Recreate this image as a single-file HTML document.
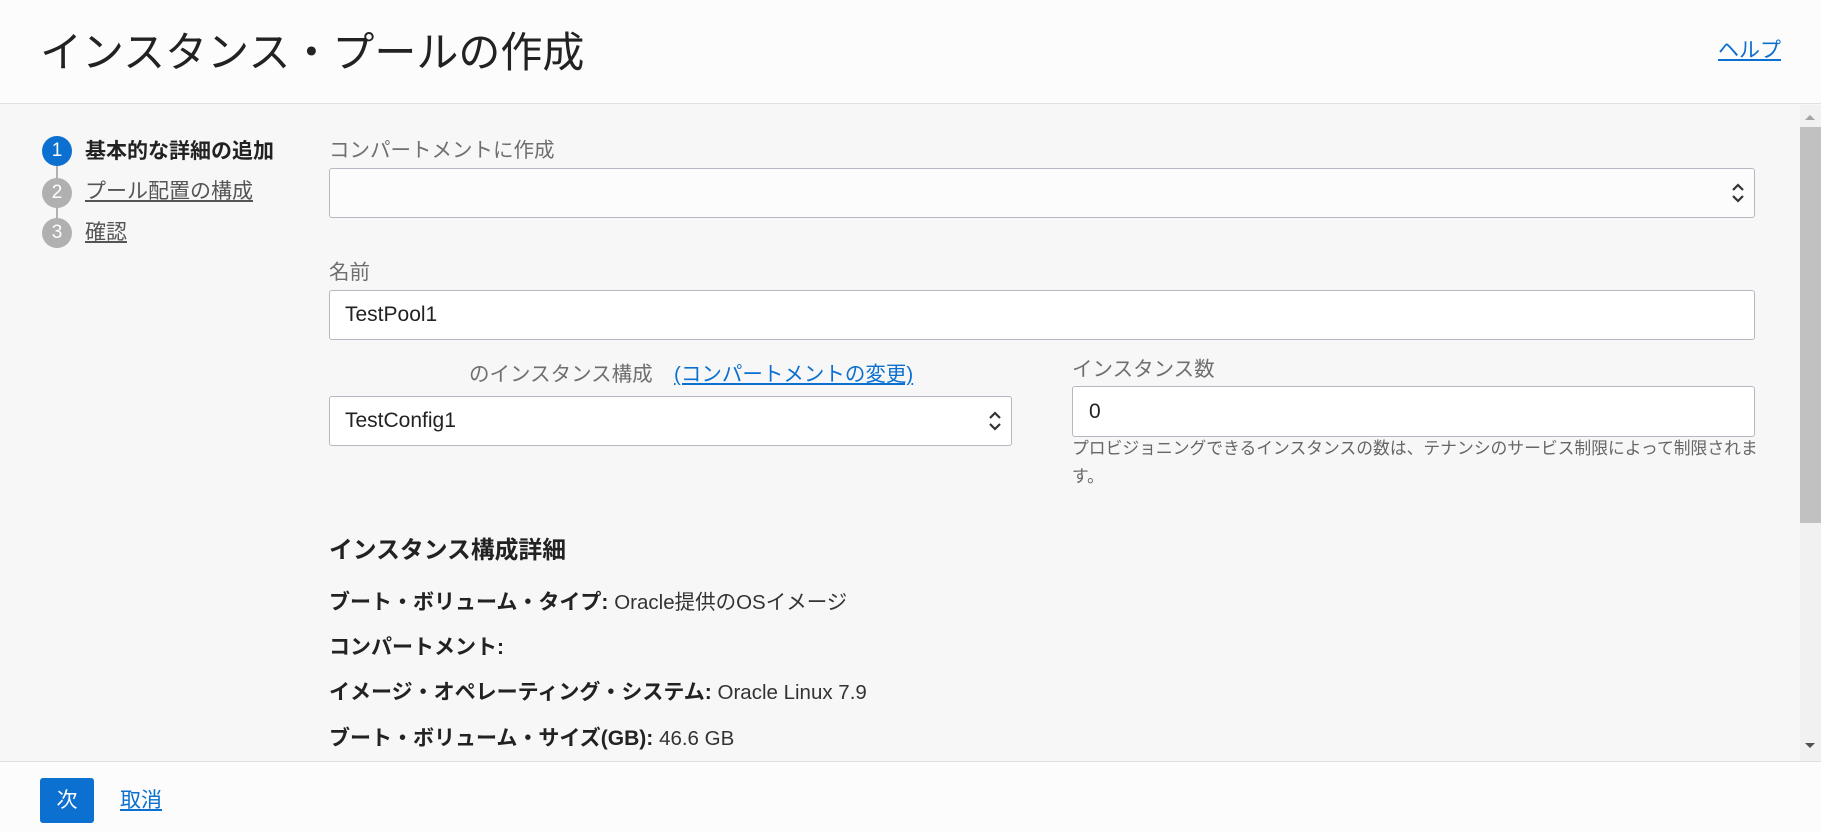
<!DOCTYPE html>
<html><head><meta charset="utf-8"><style>
*{margin:0;padding:0;box-sizing:border-box}
body{width:1821px;height:832px;overflow:hidden;background:#f7f7f7;font-family:"Liberation Sans","Noto Sans CJK JP",sans-serif;color:#222;position:relative}
.a{position:absolute;white-space:nowrap}
.hdr{position:absolute;left:0;top:0;width:1821px;height:104px;background:#fcfcfc;border-bottom:1px solid #e0e0e0}
.ftr{position:absolute;left:0;top:761px;width:1821px;height:71px;background:#fcfcfc;border-top:1px solid #e0e0e0}
.lbl{color:#6f6f6f;font-size:20.5px;line-height:28px}
.box{position:absolute;background:#fcfcfc;border:1px solid #b4b8c0;border-radius:3px}
.inp{background:#fff}
.txt{font-size:21px;line-height:28px;color:#222}
.circ{position:absolute;width:30px;height:30px;border-radius:50%;color:#fff;font-size:19px;line-height:30px;text-align:center}
.step{font-size:21px;line-height:28px}
.chev{position:absolute;width:16px;height:26px}
.row{font-size:21px;line-height:28px}
.row b{font-weight:bold}
.row span{font-size:20.5px;font-weight:normal;color:#333}
</style></head><body>
<div class="hdr"></div>
<div class="a" style="left:40px;top:25px;font-size:42px;line-height:56px;color:#222">インスタンス・プールの作成</div>
<div class="a" style="left:1718px;top:37px;font-size:21px;line-height:28px;color:#0b70cf;text-decoration:underline">ヘルプ</div>

<div class="a" style="left:56px;top:160px;width:2px;height:80px;background:#b0b0b0"></div>
<div class="circ" style="left:42px;top:136px;background:#0b70cf">1</div>
<div class="circ" style="left:42px;top:178px;background:#b0b0b0">2</div>
<div class="circ" style="left:42px;top:218px;background:#b0b0b0">3</div>
<div class="a step" style="left:85px;top:138px;font-weight:bold;color:#222">基本的な詳細の追加</div>
<div class="a step" style="left:85px;top:178px;color:#555;text-decoration:underline">プール配置の構成</div>
<div class="a step" style="left:85px;top:219px;color:#555;text-decoration:underline">確認</div>

<div class="a lbl" style="left:329px;top:137px">コンパートメントに作成</div>
<div class="box" style="left:329px;top:168px;width:1426px;height:50px"></div>
<svg class="chev" style="left:1730px;top:180px" viewBox="0 0 16 26"><path d="M3 10 L8 5 L13 10 M3 16 L8 21 L13 16" fill="none" stroke="#333" stroke-width="2.2"/></svg>

<div class="a lbl" style="left:329px;top:259px">名前</div>
<div class="box inp" style="left:329px;top:290px;width:1426px;height:50px"></div>
<div class="a txt" style="left:345px;top:301px">TestPool1</div>

<div class="a lbl" style="left:469px;top:361px">のインスタンス構成</div>
<div class="a" style="left:674px;top:361px;font-size:20.5px;line-height:28px;color:#0b70cf;text-decoration:underline">(コンパートメントの変更)</div>
<div class="box inp" style="left:329px;top:396px;width:683px;height:50px"></div>
<div class="a txt" style="left:345px;top:407px">TestConfig1</div>
<svg class="chev" style="left:987px;top:408px" viewBox="0 0 16 26"><path d="M3 10 L8 5 L13 10 M3 16 L8 21 L13 16" fill="none" stroke="#333" stroke-width="2.2"/></svg>

<div class="a lbl" style="left:1072px;top:356px">インスタンス数</div>
<div class="box inp" style="left:1072px;top:386px;width:683px;height:51px"></div>
<div class="a txt" style="left:1089px;top:398px">0</div>
<div class="a" style="left:1072px;top:435px;font-size:16.8px;line-height:28px;color:#666">プロビジョニングできるインスタンスの数は、テナンシのサービス制限によって制限されま</div>
<div class="a" style="left:1072px;top:463px;font-size:16.8px;line-height:28px;color:#666">す。</div>

<div class="a" style="left:329px;top:535px;font-size:23.8px;line-height:32px;font-weight:bold">インスタンス構成詳細</div>
<div class="a row" style="left:329px;top:589px"><b>ブート・ボリューム・タイプ:</b> <span>Oracle提供のOSイメージ</span></div>
<div class="a row" style="left:329px;top:634px"><b>コンパートメント:</b></div>
<div class="a row" style="left:329px;top:679px"><b>イメージ・オペレーティング・システム:</b> <span>Oracle Linux 7.9</span></div>
<div class="a row" style="left:329px;top:725px"><b>ブート・ボリューム・サイズ(GB):</b> <span>46.6 GB</span></div>

<div class="a" style="left:1800px;top:105px;width:21px;height:656px;background:#f1f1f1"></div>
<div class="a" style="left:1800px;top:127px;width:21px;height:396px;background:#c1c1c1"></div>
<svg class="a" style="left:1803px;top:112px" width="14" height="10" viewBox="0 0 14 10"><path d="M2 8 L7 3 L12 8Z" fill="#a3a3a3"/></svg>
<svg class="a" style="left:1803px;top:741px" width="14" height="10" viewBox="0 0 14 10"><path d="M2 2 L7 7 L12 2Z" fill="#505050"/></svg>

<div class="ftr"></div>
<div class="a" style="left:40px;top:778px;width:54px;height:45px;background:#0b70cf;border-radius:3px;color:#fff;font-size:21px;line-height:45px;text-align:center">次</div>
<div class="a" style="left:120px;top:787px;font-size:21px;line-height:28px;color:#0b70cf;text-decoration:underline">取消</div>
</body></html>
